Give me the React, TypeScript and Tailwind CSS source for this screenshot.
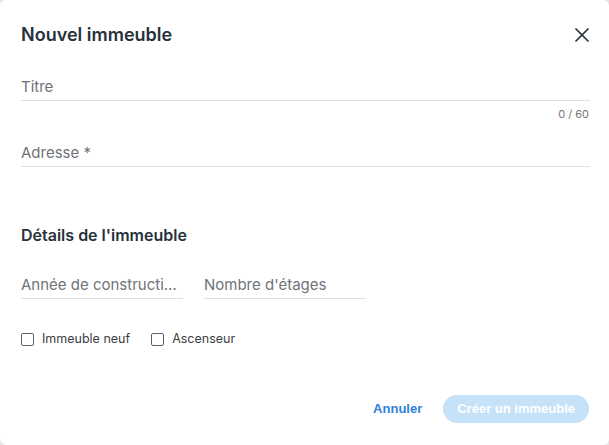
import { X } from 'lucide-react'

function UnderlineField({ label, className = '' }: { label: string; className?: string }) {
  return (
    <div className={`border-b border-[#e0e0e0] pb-[3px] ${className}`}>
      <div className="truncate pr-[6px] text-[15px] leading-[20px] text-[#6f7378]">
        {label}
      </div>
    </div>
  )
}

function Check({ label }: { label: string }) {
  return (
    <label className="flex items-center gap-[8px]">
      <span className="h-[13px] w-[13px] rounded-[2px] border border-[#5f6368] bg-white" />
      <span className="text-[12.5px] leading-[16px] text-[#3c4043]">{label}</span>
    </label>
  )
}

export default function App() {
  return (
    <div className="h-[445px] w-[609px] overflow-hidden bg-[#e5e5e5] [font-family:Inter,sans-serif]">
      <div className="flex h-full w-full flex-col rounded-[6px] bg-white pl-[21px] pr-[19px]">
        {/* Header */}
        <div className="flex items-center justify-between pt-[23px]">
          <h2 className="text-[18px] font-semibold leading-[22px] text-[#27313b]">Nouvel immeuble</h2>
          <button className="-mr-[4px] text-[#27313b]">
            <X className="h-[24px] w-[24px]" strokeWidth={1.75} />
          </button>
        </div>

        {/* Titre */}
        <UnderlineField label="Titre" className="mt-[30px]" />
        <div className="mt-[6px] pr-[1px] text-right text-[11px] leading-[14px] text-[#757575]">
          0 / 60
        </div>

        {/* Adresse */}
        <UnderlineField label="Adresse *" className="mt-[22px]" />

        {/* Details */}
        <h3 className="mt-[58px] text-[16px] font-semibold leading-[20px] text-[#27313b]">Détails de l'immeuble</h3>

        <div className="mt-[30px] flex gap-[21px]">
          <UnderlineField label="Année de construction" className="w-[162px]" />
          <UnderlineField label="Nombre d'étages" className="w-[162px]" />
        </div>

        <div className="mt-[32px] flex gap-[21px]">
          <Check label="Immeuble neuf" />
          <Check label="Ascenseur" />
        </div>

        {/* Actions */}
        <div className="mt-[48px] mr-[1px] flex items-center justify-end gap-[21px]">
          <button className="text-[13px] font-bold text-[#2f7fd8] [font-family:'Liberation_Sans',Arial,sans-serif]">
            Annuler
          </button>
          <button className="h-[28px] rounded-full bg-[#c6e2f9] px-[14px] text-[13px] font-bold text-white [font-family:'Liberation_Sans',Arial,sans-serif]">
            Créer un immeuble
          </button>
        </div>
      </div>
    </div>
  )
}
